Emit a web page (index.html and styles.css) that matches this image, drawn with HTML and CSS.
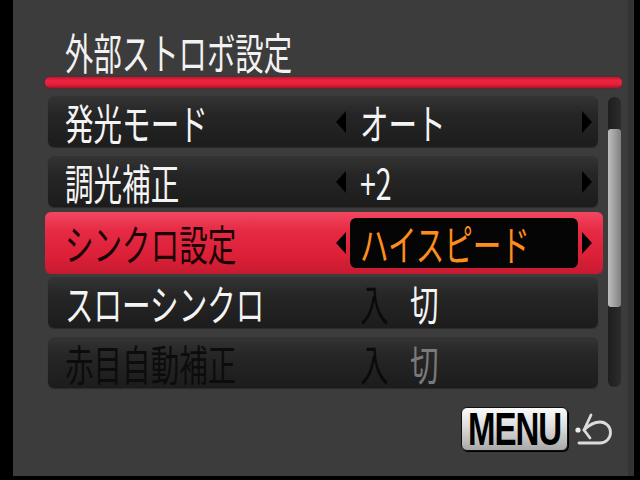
FILE: index.html
```html
<!DOCTYPE html>
<html lang="ja">
<head>
<meta charset="utf-8">
<title>外部ストロボ設定</title>
<link rel="stylesheet" href="styles.css">
</head>
<body>
<div class="screen">
  <div class="title"><span class="t">外部ストロボ設定</span></div>
  <div class="redline"></div>
  <div class="content">
    <div class="list">
      <div class="row">
        <div class="label"><span class="t">発光モード</span></div>
        <div class="arrow left"></div>
        <div class="value"><span class="t">オート</span></div>
        <div class="arrow right"></div>
      </div>
      <div class="row">
        <div class="label"><span class="t">調光補正</span></div>
        <div class="arrow left"></div>
        <div class="value"><span class="t">+2</span></div>
        <div class="arrow right"></div>
      </div>
      <div class="row active">
        <div class="label"><span class="t">シンクロ設定</span></div>
        <div class="arrow left"></div>
        <div class="value"><div class="valbox"><span class="t">ハイスピード</span></div></div>
        <div class="arrow right"></div>
      </div>
      <div class="row">
        <div class="label"><span class="t">スローシンクロ</span></div>
        <div class="gapcell"></div>
        <div class="value onoff"><span class="t off">入</span><span class="t on">切</span></div>
      </div>
      <div class="row disabled">
        <div class="label"><span class="t">赤目自動補正</span></div>
        <div class="gapcell"></div>
        <div class="value onoff"><span class="t off">入</span><span class="t dim">切</span></div>
      </div>
    </div>
    <div class="scroll"><div class="thumb"></div></div>
  </div>
  <div class="footer">
    <div class="menubtn"><span class="mt">MENU</span></div>
    <svg class="ret" width="40" height="40" viewBox="0 0 40 40">
      <circle cx="5" cy="21" r="2.6" fill="#ececec"/>
      <path d="M11 21 L18 6 M11 21 L17 29" stroke="#dcdcdc" stroke-width="2.8" fill="none" stroke-linecap="round" stroke-linejoin="round"/>
      <path d="M11 21 Q19 13 27 13 A10.5 10.5 0 0 1 27 34 H6" stroke="#dcdcdc" stroke-width="2.8" fill="none" stroke-linecap="round"/>
    </svg>
  </div>
</div>
</body>
</html>
```
FILE: styles.css
```css
html, body {
  margin: 0;
  padding: 0;
  background: #000;
}
body {
  width: 640px;
  height: 480px;
  overflow: hidden;
  font-family: "Noto Sans CJK JP", "Noto Sans", sans-serif;
}
.screen {
  margin-left: 13px;
  width: 621px;
  height: 476px;
  background: #3c3c3c;
  box-sizing: border-box;
  padding: 28px 0 0 32px;
  display: flex;
  flex-direction: column;
  border-right: 6px solid #333;
}
.t {
  display: inline-block;
  white-space: nowrap;
  font-weight: 400;
  transform: scaleX(0.68);
  transform-origin: left center;
}
.title {
  height: 46px;
  line-height: 46px;
  padding-left: 20px;
  font-size: 43px;
  color: #f2f2f2;
}
.title .t {
  transform: scaleX(0.66);
}
.redline {
  margin-top: 3px;
  width: 577px;
  height: 11px;
  border-radius: 5px;
  background: linear-gradient(#c01830, #ee2440 35%, #e41e3a 70%, #a81428);
  box-shadow: 0 0 2px #801020;
}
.content {
  margin-top: 8px;
  padding-left: 3px;
  display: flex;
  align-items: flex-start;
}
.list {
  width: 550px;
  display: flex;
  flex-direction: column;
}
.row {
  height: 51px;
  margin-bottom: 9px;
  box-sizing: border-box;
  padding: 0 6px 0 17px;
  display: flex;
  align-items: center;
  border-radius: 6px;
  background: linear-gradient(#343434, #262626 35%, #1c1c1c);
  box-shadow: 0 1px 1px #2a2a2a;
  font-size: 42px;
  color: #f4f4f4;
}
.row:last-child {
  margin-bottom: 0;
}
.label {
  width: 270px;
  flex-shrink: 0;
  height: 51px;
  line-height: 51px;
}
.arrow {
  width: 11px;
  height: 22px;
  flex-shrink: 0;
  box-sizing: border-box;
}
.arrow.left {
  border-top: 11px solid transparent;
  border-bottom: 11px solid transparent;
  border-right: 10px solid #000;
}
.arrow.right {
  border-top: 11px solid transparent;
  border-bottom: 11px solid transparent;
  border-left: 10px solid #000;
}
.gapcell {
  width: 11px;
  flex-shrink: 0;
}
.value {
  width: 236px;
  flex-shrink: 0;
  box-sizing: border-box;
  padding-left: 14px;
  line-height: 51px;
  height: 51px;
}
.onoff {
  display: flex;
  gap: 8px;
}
.onoff .t {
  width: 42px;
}
.off { color: #0a0a0a; }
.on { color: #f4f4f4; }
.dim { color: #7a7a7a; }
.disabled .label { color: #0c0c0c; }

.row.active {
  height: 62px;
  margin: -4px -5px 3px -3px;
  padding: 0 11px 0 20px;
  background: linear-gradient(#f24660, #e62a44 30%, #dc2038 70%, #c61a30);
  box-shadow: none;
}
.row.active .label {
  color: #1a0406;
  height: 62px;
  line-height: 62px;
}
.row.active .value {
  padding-left: 0;
  height: 62px;
  display: flex;
  align-items: center;
}
.valbox {
  margin: 0 4px;
  width: 228px;
  height: 50px;
  line-height: 50px;
  box-sizing: border-box;
  padding-left: 10px;
  border-radius: 6px;
  background: #050505;
  color: #ff8c1e;
}
.scroll {
  margin-left: 10px;
  margin-top: 1px;
  width: 13px;
  height: 290px;
  border-radius: 6px;
  background: linear-gradient(to right, #1e1e1e, #2c2c2c);
  padding-top: 32px;
  box-sizing: border-box;
}
.thumb {
  height: 178px;
  border-radius: 3px;
  background: linear-gradient(to right, #bdbdbd, #9a9a9a 60%, #808080);
}
.footer {
  margin-top: 19px;
  display: flex;
  justify-content: flex-end;
  align-items: center;
  padding-right: 15px;
  gap: 5px;
}
.menubtn {
  width: 107px;
  height: 44px;
  box-sizing: border-box;
  border-radius: 6px;
  background: linear-gradient(#fafafa, #dcdcdc 45%, #a8a8a8);
  border: 1px solid #111;
  box-shadow: 1px 1px 0 #000;
  display: flex;
  align-items: center;
  justify-content: center;
}
.mt {
  display: inline-block;
  font-family: "Liberation Sans", Arial, sans-serif;
  font-weight: bold;
  font-size: 33px;
  line-height: 33px;
  color: #000;
  transform: scaleY(1.38);
  letter-spacing: -1px;
}
.ret {
  display: block;
}
```
